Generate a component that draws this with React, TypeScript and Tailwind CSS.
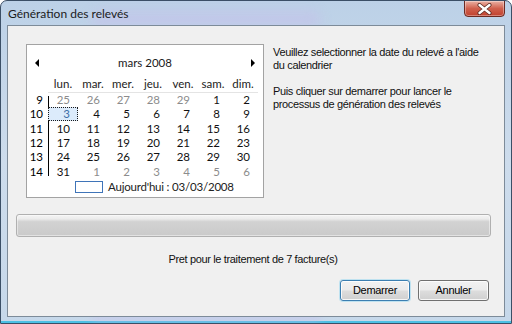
import React from "react";

const weeks = [
  { n: 9, d: [["25", 0], ["26", 0], ["27", 0], ["28", 0], ["29", 0], ["1", 1], ["2", 1]] },
  { n: 10, d: [["3", 1], ["4", 1], ["5", 1], ["6", 1], ["7", 1], ["8", 1], ["9", 1]] },
  { n: 11, d: [["10", 1], ["11", 1], ["12", 1], ["13", 1], ["14", 1], ["15", 1], ["16", 1]] },
  { n: 12, d: [["17", 1], ["18", 1], ["19", 1], ["20", 1], ["21", 1], ["22", 1], ["23", 1]] },
  { n: 13, d: [["24", 1], ["25", 1], ["26", 1], ["27", 1], ["28", 1], ["29", 1], ["30", 1]] },
  { n: 14, d: [["31", 1], ["1", 0], ["2", 0], ["3", 0], ["4", 0], ["5", 0], ["6", 0]] },
];
const days = ["lun.", "mar.", "mer.", "jeu.", "ven.", "sam.", "dim."];

function Calendar() {
  return (
    <div className="w-[238px] h-[154px] shrink-0 bg-white border border-[#a3a3a3] flex flex-col pt-[10px] font-['Lato',sans-serif] text-[11.5px] leading-[14px] text-black">
      <div className="h-[16px] flex items-center justify-between px-[8px]">
        <svg width="4" height="8" viewBox="0 0 4 8"><path d="M4 0 L0 4 L4 8 Z" fill="#000" /></svg>
        <span className="text-[#1a1a1a]">mars 2008</span>
        <svg width="4" height="8" viewBox="0 0 4 8"><path d="M0 0 L4 4 L0 8 Z" fill="#000" /></svg>
      </div>
      <div className="mt-[5px] ml-[21px] w-[210px] h-[17px] flex border-b border-[#e4e4e4]">
        {days.map((d) => (
          <div key={d} className="w-[30px] text-center text-[#222] leading-[16px]">{d}</div>
        ))}
      </div>
      <div className="flex">
        <div className="w-[21px] flex flex-col">
          {weeks.map((w) => (
            <div key={w.n} className="h-[14.33px] text-right pr-[5px] leading-[14px]">{w.n}</div>
          ))}
        </div>
        <div className="w-px bg-black mt-[3px] mb-[3px]" />
        <div className="flex flex-col -ml-px">
          {weeks.map((w) => (
            <div key={w.n} className="h-[14.33px] flex">
              {w.d.map(([t, cur], i) => {
                const sel = w.n === 10 && i === 0;
                return (
                  <div
                    key={i}
                    className={
                      "w-[30px] h-[14px] text-right overflow-hidden " +
                      (sel
                        ? "bg-[#dcebfb] border border-dotted border-[#1a1a1a] text-[#3d6ea8] pr-[7px] leading-[12px]"
                        : cur
                        ? "text-[#111] pr-[8px] leading-[14px]"
                        : "text-[#8c8c8c] pr-[8px] leading-[14px]")
                    }
                  >
                    {t}
                  </div>
                );
              })}
            </div>
          ))}
        </div>
      </div>
      <div className="flex items-center h-[14px] mt-[1px] ml-[48px]">
        <div className="w-[28px] h-[12px] border border-[#3f74b8] bg-white" />
        <span className="ml-[5px] text-[#222] tracking-[-0.2px]">Aujourd'hui : 03/03/2008</span>
      </div>
    </div>
  );
}

export default function App() {
  return (
    <div className="relative w-[512px] h-[324px] overflow-hidden rounded-t-[7px] border border-[#3b4f66] bg-gradient-to-b from-[#bcd1e7] via-[#cddcec] to-[#c6d8ea] flex flex-col">
      <div className="pointer-events-none absolute left-[90px] top-[10px] w-[230px] h-[16px] rounded-full bg-[#c8b8ec] opacity-40 blur-[6px]" />
      <div className="pointer-events-none absolute left-[90px] bottom-[0px] w-[230px] h-[8px] rounded-full bg-[#c8b8ec] opacity-40 blur-[4px]" />
      <div className="relative h-[24px] flex items-start justify-between pl-[7px] pr-[6px]">
        <span className="mt-[5px] text-[12px] leading-[16px] text-[#1b1b1b] font-['Lato',sans-serif]">Génération des relevés</span>
        <div className="w-[41px] h-[17px] -mt-px rounded-b-[4px] border border-[#6b2a22] bg-gradient-to-b from-[#e9b1a5] via-[#d0604d] to-[#c0412e] flex items-center justify-center shadow-[inset_0_0_0_1px_rgba(255,255,255,0.35)]">
          <svg width="15" height="12" viewBox="0 0 15 12">
            <path d="M2.5 2 L12.5 10 M12.5 2 L2.5 10" stroke="#5a2a22" strokeWidth="4" strokeLinecap="round" />
            <path d="M2.5 2 L12.5 10 M12.5 2 L2.5 10" stroke="#ffffff" strokeWidth="2.4" strokeLinecap="round" />
          </svg>
        </div>
      </div>
      <div className="relative mx-[6px] h-[292px] border border-[#7d8b99] bg-[#f0f0f0] flex flex-col font-['Liberation_Sans',Arial,sans-serif] text-[11px] leading-[13px] text-black">
        <div className="flex pl-[18px] pt-[18px]">
          <Calendar />
          <div className="ml-[9px] mt-[2px] text-[#111] whitespace-nowrap tracking-[-0.35px]">
            <div>Veuillez selectionner la date du relevé a l'aide</div>
            <div>du calendrier</div>
            <div className="h-[13px]" />
            <div>Puis cliquer sur demarrer pour lancer le</div>
            <div>processus de génération des relevés</div>
          </div>
        </div>
        <div className="ml-[8px] mt-[16px] w-[475px] h-[23px] rounded-[3px] border border-[#b0b0b0] bg-[linear-gradient(to_bottom,#f4f4f4_0%,#ececec_18%,#d2d2d2_32%,#cacaca_100%)] shadow-[inset_0_0_0_1px_rgba(255,255,255,0.45)]" />
        <div className="mt-[15px] text-center text-[#111] leading-[14px] pr-[6px] tracking-[-0.35px]">Pret pour le traitement de 7 facture(s)</div>
        <div className="flex justify-end gap-[8px] mt-[14px] pr-[15px]">
          <button className="w-[70px] h-[21px] rounded-[3px] border border-[#3c7fb1] bg-[linear-gradient(to_bottom,#f2f2f2_0%,#ebebeb_48%,#dddddd_52%,#cfcfcf_100%)] shadow-[inset_0_0_0_1px_rgba(255,255,255,0.8),0_0_0_1px_rgba(100,200,240,0.35)] text-[11px] text-black tracking-[-0.3px]">Demarrer</button>
          <button className="w-[71px] h-[21px] rounded-[3px] border border-[#707070] bg-[linear-gradient(to_bottom,#f2f2f2_0%,#ebebeb_48%,#dddddd_52%,#cfcfcf_100%)] shadow-[inset_0_0_0_1px_rgba(255,255,255,0.8)] text-[11px] text-black tracking-[-0.3px]">Annuler</button>
        </div>
      </div>
      <div className="flex-1 border-b-2 border-[#4cc0e4]" />
    </div>
  );
}
